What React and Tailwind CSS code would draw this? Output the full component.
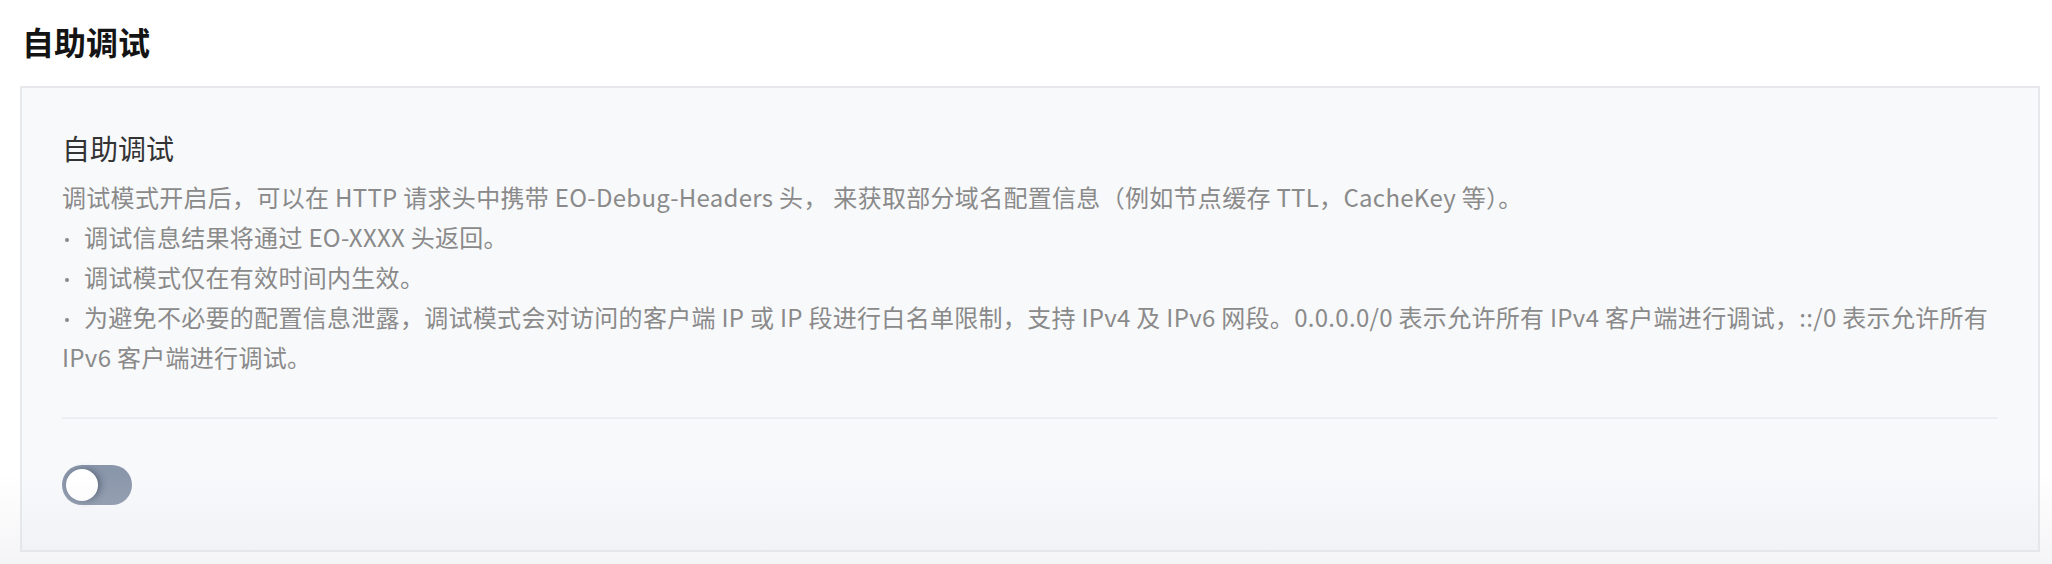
import React from "react";

const font = { fontFamily: '"Noto Sans CJK SC", "Noto Sans", sans-serif' };

function Bullet() {
  return (
    <span className="inline-block w-[4px] h-[4px] rounded-full bg-[#8a8a8a] ml-[3px] mr-[15px] align-middle" />
  );
}

export default function App() {
  return (
    <div
      className="relative w-[2052px] h-[564px] bg-white overflow-hidden pt-[17px] pl-[20px] pr-[12px]"
      style={font}
    >
      <h1 className="h-[48px] leading-[48px] text-[32px] font-bold text-[#141414] pl-[2px]">
        自助调试
      </h1>
      <div className="mt-[21px] border-2 border-[#e7e8ec] bg-[#f8f9fb] px-[40px] pt-[40px] pb-[45px]">
        <div className="text-[28px] leading-[40px] text-[#333333]">自助调试</div>
        <div className="mt-[9px] text-[24px] leading-[40px] tracking-[0.3px] text-[#8a8a8a]">
          <p>
            调试模式开启后，可以在 HTTP 请求头中携带 EO-Debug-Headers 头， 来获取部分域名配置信息（例如节点缓存 TTL，CacheKey 等）。
          </p>
          <p>
            <Bullet />调试信息结果将通过 EO-XXXX 头返回。
          </p>
          <p>
            <Bullet />调试模式仅在有效时间内生效。
          </p>
          <p>
            <Bullet />为避免不必要的配置信息泄露，调试模式会对访问的客户端 IP 或 IP 段进行白名单限制，支持 IPv4 及 IPv6 网段。0.0.0.0/0 表示允许所有 IPv4 客户端进行调试，::/0 表示允许所有 IPv6 客户端进行调试。
          </p>
        </div>
        <div className="mt-[40px] h-[2px] bg-[#eceef2]" />
        <div className="mt-[46px] flex">
          <button
            type="button"
            className="relative w-[70px] h-[40px] rounded-full bg-[#8a96aa] p-[4px] flex items-center"
          >
            <span className="block w-[32px] h-[32px] rounded-full bg-white shadow-[3px_0_6px_rgba(40,50,70,0.45)]" />
          </button>
        </div>
      </div>
      <div className="pointer-events-none absolute left-0 right-0 bottom-0 h-[90px] bg-gradient-to-b from-transparent to-[rgba(225,226,232,0.35)]" />
    </div>
  );
}
